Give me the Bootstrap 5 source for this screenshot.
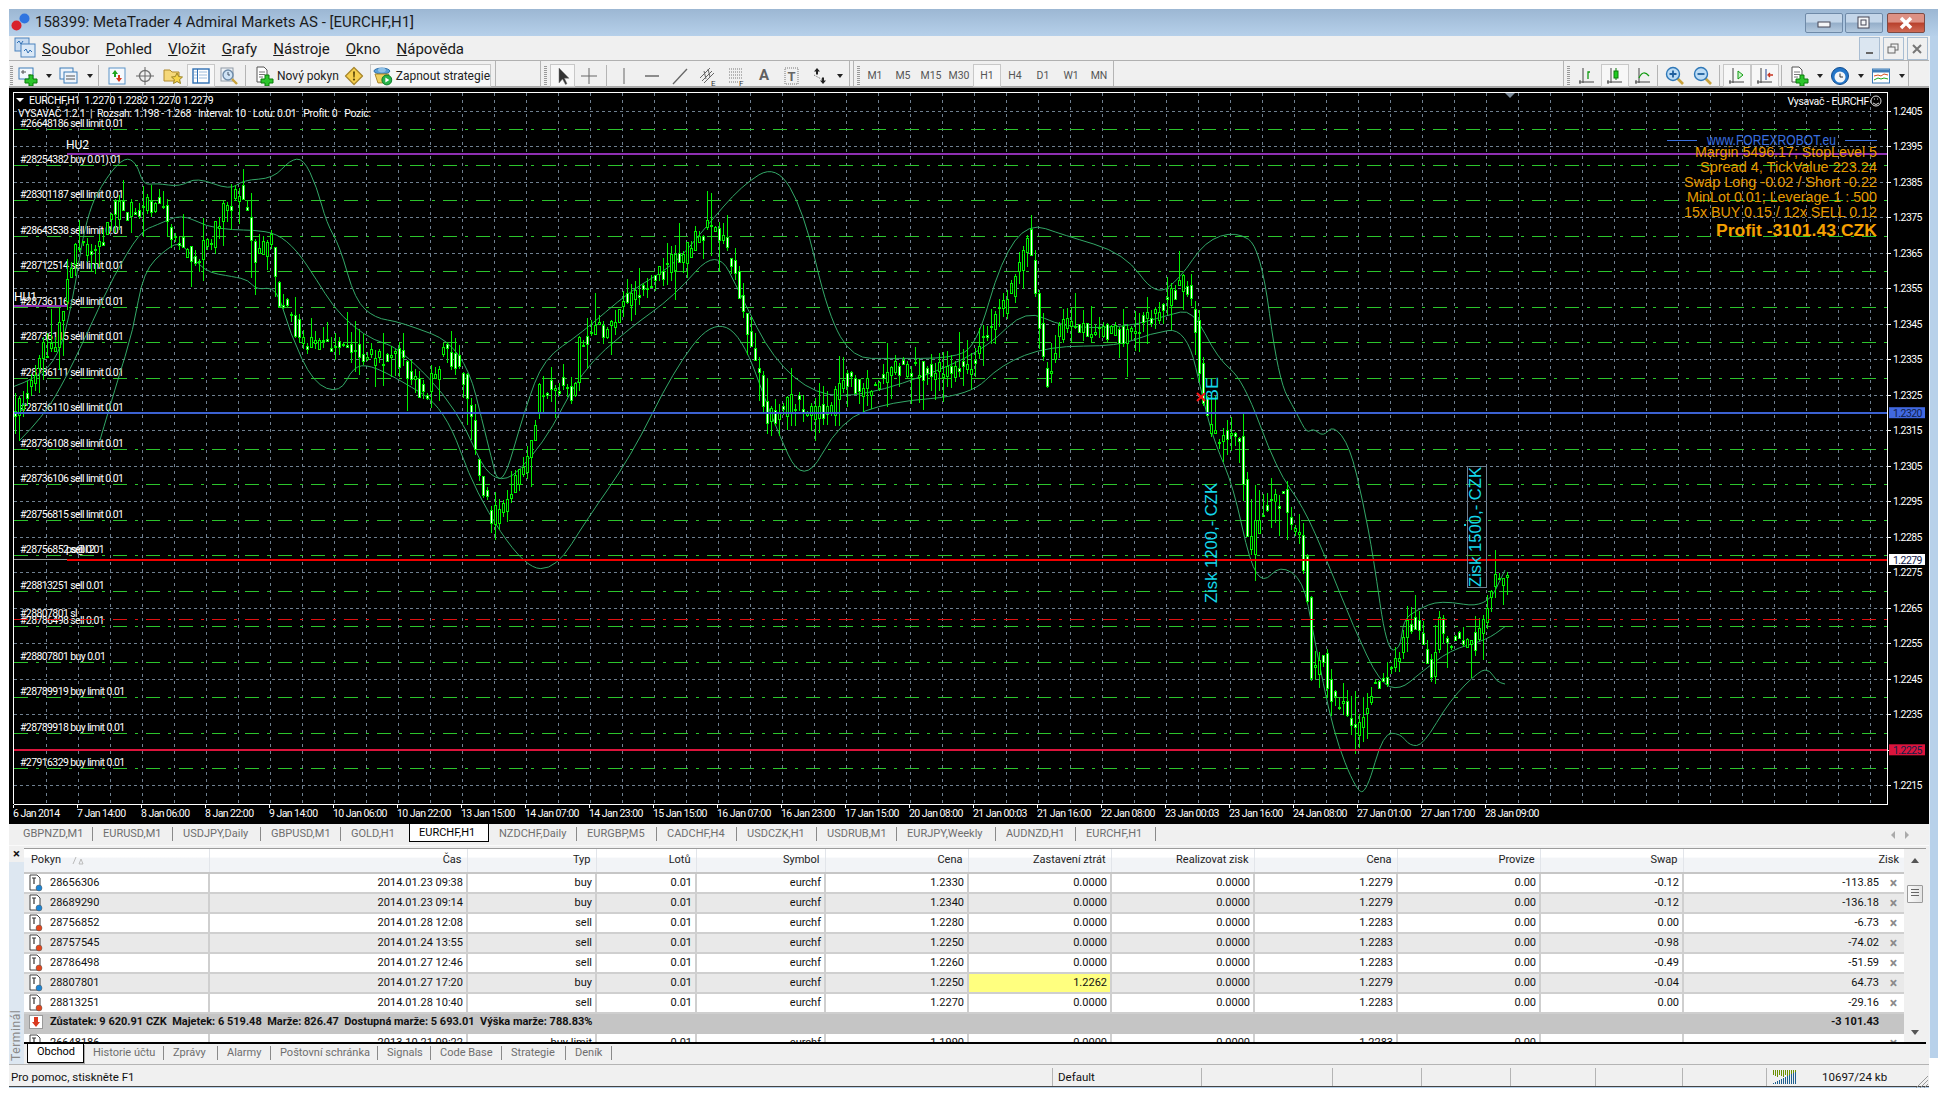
<!DOCTYPE html>
<html lang="cs">
<head>
<meta charset="UTF-8">
<title>158399: MetaTrader 4 Admiral Markets AS - [EURCHF,H1]</title>
<link href="https://cdn.jsdelivr.net/npm/bootstrap@5.3.3/dist/css/bootstrap.min.css" rel="stylesheet">
<style>
html, body { background: #fff; overflow: hidden; }
body { font-family: Roboto, "Liberation Sans", sans-serif; font-size: 11px; color: #111; padding: 9px 0 0 9px; width: 1938px; height: 1098px; }
svg { display: block; }

/* title bar */
.titlebar { height: 27px; background: linear-gradient(#9cb7d3, #b6d0ea); font-size: 15px; color: #1c1c1c; }
.logo { width: 22px; height: 24px; margin: 0 2px; }
.win-btn { width: 38px; height: 20px; padding: 0; border: 1px solid #6f8aa8; border-radius: 2px; background: linear-gradient(#c4d6e9 45%, #94aec9 50%, #b4c9de); margin-right: 2px; }
.win-btn.close-x { background: linear-gradient(#dd9184 45%, #b8402c 50%, #cf6a55); border-color: #7d4a44; margin-left: 2px; }
.win-btns { margin-right: 11px; }
.shell { width: 1920px; }
.frame-r { width: 9px; height: 1022px; background: #b8d1ea; border-left: 1px solid #eef3f8; }

/* menu */
.menubar { height: 25px; background: #f0f0f0; border-bottom: 1px solid #b0b0b0; }
.menubar .nav-link { color: #1a1a1a; font-size: 15px; padding: 1px 10px 0; line-height: 24px; }
.mdi-btn { width: 21px; height: 23px; padding: 0; margin-left: 3px; border: 1px solid #a9bdd2; border-radius: 0; background: #dbe6f1; }
.mdi-btn.plain { background: #f0f0f0; }
.mdi-btns { margin-right: 1px; }
.menu-ico { width: 22px; height: 22px; margin-left: 5px; margin-right: -2px; }

/* toolbars */
.toolbar { height: 27px; background: #f0f0f0; border-bottom: 2px solid #a8a8a8; }
.tgroup { height: 25px; padding-top: 4px; border-right: 1px solid #b4b4b4; }
.tg1 { width: 487px; }
.tg2 { width: 310px; margin-left: 44px; border-left: 1px solid #b4b4b4; }
.tg3 { width: 261px; margin-left: 3px; border-left: 1px solid #b4b4b4; }
.tg4 { width: 346px; margin-left: auto; margin-right: 20px; border-left: 1px solid #b4b4b4; }
.grip { width: 8px; height: 19px; margin: 0 1px 0 0; background: repeating-linear-gradient(#9a9a9a 0 1px, transparent 1px 2px); background-size: 3px 100%; background-repeat: no-repeat; background-position: center; flex: none; }
.tg1 .grip { width: 4px; margin-right: 1px; }
.tg3 .grip { margin-right: -1px; }
.tb { width: 28px; height: 23px; padding: 0; border: 1px solid transparent; border-radius: 0; display: flex; align-items: center; justify-content: center; font-size: 10.5px; color: #555; flex: none; white-space: nowrap; }
.tb.on { background: #f7f7f7; border-color: #c8c8c8; }
.tb.narrow { width: 25px; }
.tb-a { font-size: 15px; font-weight: 700; color: #606060; }
.tb-arrow { width: 13px; height: 23px; display: flex; align-items: center; justify-content: center; flex: none; }
.tb-arrow::after { content: ""; border: 3px solid transparent; border-top: 4px solid #222; border-bottom: 0; }
.tg2 .tb-arrow { width: 11px; }
.tb-wide { width: 90px; justify-content: flex-start; color: #222; font-size: 12px; gap: 3px; padding-left: 3px; }
.tb-strat { width: 121px; margin-left: 2px; justify-content: flex-start; color: #222; font-size: 12px; gap: 3px; padding-left: 2px; }
.tsep { width: 1px; height: 22px; background: #b4b4b4; flex: none; }
.sep-a { margin: 0 4px 0 2px; }
.tg2 .sep-a { margin: 0 3px; }
.sep-b { margin: 0 3px 0 2px; }
.sep-c { margin: 0 3px 0 0; }

/* chart */
.chart { height: 736px; background: #000; }
.c-lbl { font: 10.5px Roboto, sans-serif; fill: #fff; letter-spacing: -.6px; }
.c-hd { font: 10.5px Roboto, sans-serif; fill: #fff; letter-spacing: -.3px; }
.c-hu { font: 12px Roboto, sans-serif; fill: #fff; }
.c-ax { font: 10.5px Roboto, sans-serif; fill: #fff; letter-spacing: -.55px; }
.c-tag { font: 10.5px Roboto, sans-serif; fill: #10204a; letter-spacing: -.55px; }
.c-info { font: 15px "Liberation Sans", sans-serif; fill: #e69a00; }
.c-web { fill: #3a70e0; }
.c-profit { font-weight: 700; font-size: 16px; fill: #f5a000; }
.c-cyan { font: 16px "Liberation Sans", sans-serif; fill: #14d6ea; }

/* chart tabs */
.chart-tabs { height: 22px; background: #f0f0f0; border-bottom: 1px solid #fafafa; }
.ctab { width: 80px; height: 14px; line-height: 13px; padding-left: 10px; color: #6e6e6e; border-right: 1px solid #8a8a8a; flex: none; margin-top: 3px; white-space: nowrap; }
.ctab.first { width: 84px; padding-left: 14px; }
.ctab.w68 { width: 68px; }
.ctab.w88 { width: 88px; }
.ctab.w100 { width: 99px; }
.ctab.active { color: #000; background: #fff; height: 18px; margin-top: 0; line-height: 18px; border: 1px solid #000; border-top: 0; padding-left: 9px; }
.ctab.pre { border-right: 0; }
.tab-nav { margin-right: 20px; gap: 10px; }
.tab-nav i { border: 4px solid transparent; display: block; width: 0; }
.tab-nav .l { border-right: 4px solid #aaa; border-left: 0; }
.tab-nav .r { border-left: 4px solid #aaa; border-right: 0; }

/* terminal */
.terminal { height: 219px; background: #f0f0f0; padding-top: 2px; border-bottom: 1px solid #b4b4b4; }
.rail { width: 15px; }
.rail-x { height: 14px; font-size: 13px; font-weight: 700; line-height: 12px; text-align: center; }
.rail-t { background: #dde7f1; color: #8a8a8a; font-size: 12px; letter-spacing: .6px; writing-mode: vertical-rl; transform: rotate(180deg); padding-top: 3px; line-height: 15px; }
.orders-box { width: 1902px; height: 194px; overflow: hidden; border-top: 1px solid #9c9c9c; background: #fff; }
.orders-wrap { width: 1880px; }
.orders.table { width: 1880px; table-layout: fixed; margin: 0; border-collapse: collapse; font-size: 11px; }
.orders.table th { height: 24px; padding: 0 5px 0 0; font-weight: 400; text-align: right; vertical-align: middle; color: #222; background: linear-gradient(#fff 35%, #f2f4f7 40%, #f2f4f7); border: 0; border-right: 1px solid #e2e5ea; border-bottom: 2px solid #c6c6c6; }
.orders.table th:first-child { text-align: left; padding-left: 7px; }
.orders.table td { height: 20px; padding: 0 3px 0 0; line-height: 18px; text-align: right; color: #111; background: #fff; border: 0; border-right: 2px solid #cfcfcf; border-bottom: 2px solid #cfcfcf; white-space: nowrap; overflow: hidden; }
.orders.table thead tr { border-bottom: 2px solid #fff; }
.orders.table td:first-child { text-align: left; padding-left: 4px; }
.orders.table td:last-child, .orders.table th:last-child { border-right: 0; }
.orders.table tr.alt td { background: #e9e9e9; }
.orders.table tr td.stop { background: #ffff7f; }
.orders.table tr.bal td { background: #c5c5c5; font-weight: 700; border: 0; height: 21px; line-height: 16px; }
.cell-ico { display: flex; align-items: center; gap: 6px; }
.buy { color: #1c86d6; }
.sell { color: #e5471c; }
.del { display: inline-block; width: 22px; padding: 0 2px 0 9px; color: #8b8b8b; font-weight: 700; font-size: 14px; line-height: 12px; text-align: center; vertical-align: middle; }
.sort { display: inline-block; margin-left: 11px; vertical-align: middle; }
.vscroll { width: 22px; background: #f0f0f0; }
.vscroll .up { border: 4px solid transparent; border-bottom: 5px solid #555; border-top: 0; margin-top: 9px; }
.vscroll .down { border: 4px solid transparent; border-top: 5px solid #555; border-bottom: 0; margin-bottom: 7px; }
.thumb { width: 16px; height: 18px; margin-top: 22px; border: 1px solid #9a9a9a; border-radius: 1px; background: linear-gradient(90deg, #fafafa, #e4e4e4); padding: 3px 3px; }
.thumb hr { margin: 0 0 2px; border: 0; border-top: 1px solid #666; opacity: 1; }
.term-tabs { height: 21px; border-top: 2px solid #000; display: grid; grid-template-columns: 60px 80px 54px 53px 107px 53px 71px 64px 46px; justify-content: start; }
.ttab { height: 14px; line-height: 13px; padding-left: 9px; color: #6e6e6e; border-right: 1px solid #8a8a8a; margin-top: 2px; white-space: nowrap; }
.ttab.active { margin: 0 0 0 3px; height: 19px; line-height: 16px; color: #000; background: #fff; border: 1px solid #000; border-top: 0; box-shadow: 1px 1px 0 #aaa; }

/* status bar */
.statusbar { height: 22px; background: #f0f0f0; display: grid; grid-template-columns: 1044px 149px 131px 89px 89px 85px 87px 84px 1fr; border-bottom: 1px solid #444; font-size: 11.5px; line-height: 20px; }
.statusbar > div { border-right: 1px solid #b4b4b4; padding-left: 5px; margin-top: 3px; height: 18px; line-height: 19px; white-space: nowrap; }
.statusbar > div:first-child { padding-left: 2px; }
.statusbar > div:last-child { border: 0; padding-left: 6px; display: flex; gap: 25px; align-items: center; position: relative; }
.size-grip { position: absolute; right: 0; bottom: -3px; }
.bottom-edge { height: 1px; background: #b8d1ea; }
</style>
</head>
<body>
<svg width="0" height="0" class="position-absolute">
  <defs>
    <symbol id="plus" viewBox="0 0 20 20"><path d="M10 9h4v4h4v4h-4v3h-4v-3H6v-4h4z" fill="#2cc52c" stroke="#0a7d0a"/></symbol>
    <symbol id="i-new" viewBox="0 0 20 20"><rect x="1" y="2" width="14" height="11" fill="#f4f8fc" stroke="#3d7cb8"/><path d="M3 6h5M5 4v4M10 9h3" stroke="#555"/><use href="#plus" width="20" height="20" x="1"/></symbol>
    <symbol id="i-prof" viewBox="0 0 20 20"><rect x="1" y="2" width="13" height="11" fill="#eef4fb" stroke="#3d7cb8"/><rect x="5" y="6" width="13" height="11" fill="#eef4fb" stroke="#3d7cb8"/><path d="M7 10h9M7 13h9" stroke="#555"/></symbol>
    <symbol id="i-market" viewBox="0 0 20 20"><rect x="2" y="2" width="16" height="16" fill="#f6f9fd" stroke="#5b93c7"/><path d="M8 4l3 4H9v3H7V8H5z" fill="#1fa51f"/><path d="M12 16l3-4h-2V9h-2v3H9z" fill="#d9381e"/></symbol>
    <symbol id="i-target" viewBox="0 0 20 20"><circle cx="10" cy="10" r="5.5" fill="none" stroke="#777" stroke-width="1.4"/><path d="M10 1v18M1 10h18" stroke="#666"/></symbol>
    <symbol id="i-folder" viewBox="0 0 20 20"><path d="M1 4h6l2 2h7v9H1z" fill="#f5d87a" stroke="#b08a2c"/><path d="M14 7l1.7 3.6 3.8.4-2.9 2.6.9 3.9-3.500-2-3.500 2 .9-3.900-2.900-2.600 3.800-.4z" fill="#f6d447" stroke="#9c8424"/></symbol>
    <symbol id="i-nav" viewBox="0 0 20 20"><rect x="2" y="3" width="16" height="14" fill="#fff" stroke="#2f6fb3" stroke-width="1.4"/><path d="M6.5 3v14" stroke="#2f6fb3"/><path d="M3 6h3M3 9h3M3 12h3M8 6h8M8 9h8M8 12h8" stroke="#9cbcdc"/></symbol>
    <symbol id="i-test" viewBox="0 0 20 20"><rect x="2" y="2" width="12" height="13" fill="#eef2f6" stroke="#8f9aa5"/><circle cx="9" cy="9" r="5" fill="#cfe3f5" stroke="#6e8ba8" stroke-width="1.4"/><path d="M9 6v3h2" stroke="#456" fill="none"/><path d="M13 13l5 5" stroke="#c9a23b" stroke-width="2.4"/></symbol>
    <symbol id="i-order" viewBox="0 0 20 20"><path d="M3 1h7l3 3v12H3z" fill="#fff" stroke="#555"/><path d="M5 6h6M5 8.5h6M5 11h4" stroke="#777"/><use href="#plus" width="20" height="20" x="1"/></symbol>
    <symbol id="i-warn" viewBox="0 0 20 20"><path d="M10 1.5l8.5 8.5-8.5 8.5L1.5 10z" fill="#f6cf4e" stroke="#a9882d" stroke-linejoin="round" stroke-width="1.3"/><path d="M9 5.5h2l-.4 6h-1.2z" fill="#5a4708"/><circle cx="10" cy="13.6" r="1.1" fill="#5a4708"/></symbol>
    <symbol id="i-strat" viewBox="0 0 20 20"><ellipse cx="9" cy="5" rx="8" ry="3" fill="#5a9fd8" stroke="#2f6fa8"/><ellipse cx="9" cy="4" rx="4" ry="2.4" fill="#8fc1e8"/><path d="M2 8h14l-2 9H5z" fill="#f0d060" stroke="#a9882d"/><circle cx="14" cy="14" r="5" fill="#27b34a" stroke="#0f7a2b"/><path d="M12.5 11.5l4 2.5-4 2.5z" fill="#fff"/></symbol>
    <symbol id="i-cursor" viewBox="0 0 20 20"><path d="M6 2v15l3.5-4 3 5.500 1.500-.8-2.600-5.500H16z" fill="#333" stroke="#777" stroke-width=".5"/></symbol>
    <symbol id="i-cross" viewBox="0 0 20 20"><path d="M10 2v16M2 10h16" stroke="#666"/></symbol>
    <symbol id="i-v" viewBox="0 0 20 20"><path d="M10 2v16" stroke="#666"/></symbol>
    <symbol id="i-h" viewBox="0 0 20 20"><path d="M3 10h14" stroke="#555" stroke-width="1.300"/></symbol>
    <symbol id="i-trend" viewBox="0 0 20 20"><path d="M3 18L17 3" stroke="#666" stroke-width="1.300"/></symbol>
    <symbol id="i-chan" viewBox="0 0 20 20"><path d="M2 12L12 2M4 15L14 5M6 17L16 7M6 5l2 8M10 3l2 8" stroke="#666" fill="none"/><text x="13" y="20" font-size="8" font-family="Roboto" fill="#333">E</text></symbol>
    <symbol id="i-fib" viewBox="0 0 20 20"><path d="M3 3h13M3 6h13M3 9h13M3 12h13M3 16h9" stroke="#777" stroke-dasharray="1 1"/><text x="13" y="20" font-size="8" font-family="Roboto" fill="#333">F</text></symbol>
    <symbol id="i-tx" viewBox="0 0 20 20"><rect x="3" y="2" width="13" height="16" fill="none" stroke="#777" stroke-dasharray="1 1"/><text x="9.500" y="15" text-anchor="middle" font-size="13" font-weight="700" font-family="Roboto" fill="#666">T</text></symbol>
    <symbol id="i-arr" viewBox="0 0 20 20"><path d="M7 2l3 3.500H8v3H6v-3H4z" fill="#222"/><path d="M12 17l3-3.500h-2v-3h-2v3H9z" fill="#222" transform="translate(1 1)"/><path d="M4 9l9 5" stroke="#666" stroke-dasharray="1 1"/></symbol>
    <g id="axes"><path d="M6 2v15M2 16h15" stroke="#444"/><path d="M3 14v4" stroke="#444"/></g>
    <symbol id="i-bar" viewBox="0 0 20 20"><use href="#axes"/><path d="M11 13V6h2" stroke="#109a10" fill="none" stroke-width="1.300"/></symbol>
    <symbol id="i-candle" viewBox="0 0 20 20"><use href="#axes"/><rect x="9" y="5" width="4" height="7" fill="#1ecb1e" stroke="#0a7d0a"/><path d="M11 2v3M11 12v2" stroke="#0a7d0a"/></symbol>
    <symbol id="i-line" viewBox="0 0 20 20"><use href="#axes"/><path d="M6 12Q10 3 16 10" stroke="#109a10" fill="none" stroke-width="1.200"/></symbol>
    <symbol id="i-zin" viewBox="0 0 20 20"><path d="M12 12l6 6" stroke="#c9a23b" stroke-width="2.600"/><circle cx="8" cy="8" r="6.500" fill="#bcdcf5" stroke="#2f78b8" stroke-width="1.400"/><path d="M4.500 8h7M8 4.500v7" stroke="#1f5f9e" stroke-width="1.800"/></symbol>
    <symbol id="i-zout" viewBox="0 0 20 20"><path d="M12 12l6 6" stroke="#c9a23b" stroke-width="2.600"/><circle cx="8" cy="8" r="6.500" fill="#bcdcf5" stroke="#2f78b8" stroke-width="1.400"/><path d="M4.500 8h7" stroke="#1f5f9e" stroke-width="1.800"/></symbol>
    <symbol id="i-auto" viewBox="0 0 20 20"><use href="#axes"/><path d="M11 5l5 4-5 4z" fill="#c8f5c8" stroke="#109a10"/></symbol>
    <symbol id="i-shift" viewBox="0 0 20 20"><use href="#axes"/><path d="M11 3v11" stroke="#23408f"/><path d="M18 9h-4M15 7l-2 2 2 2" stroke="#c8321e" fill="none" stroke-width="1.300"/></symbol>
    <symbol id="i-clock" viewBox="0 0 20 20"><circle cx="10" cy="10" r="8.500" fill="#2376c9" stroke="#134e8f"/><circle cx="10" cy="11" r="5.500" fill="#f3f6f8"/><path d="M10 7.500V11h3" stroke="#333" fill="none"/></symbol>
    <symbol id="i-tmpl" viewBox="0 0 20 20"><rect x="1.500" y="3" width="17" height="14" fill="#fff" stroke="#3d7cb8"/><rect x="2" y="3.500" width="16" height="3" fill="#3d7cb8"/><path d="M3 10l4-1 3 1 3-2 4 1" stroke="#d8501e" fill="none"/><path d="M3 14l4-2 3 1 3-1 4 1" stroke="#1fa51f" fill="none"/></symbol>
    <symbol id="i-ticket" viewBox="0 0 16 18"><path d="M2 1h7l3 3v12H2z" fill="#fff" stroke="#444"/><path d="M4 4h4M6 4v6" stroke="#333" stroke-width="1.200"/><circle cx="11" cy="14" r="3" fill="currentColor" stroke="#555" stroke-width=".5"/></symbol>
  </defs>
</svg>

<div class="titlebar d-flex align-items-center">
  <svg class="logo" viewBox="0 0 22 24"><circle cx="13.500" cy="7.500" r="5" fill="#2f74e0"/><circle cx="5.500" cy="14.500" r="5" fill="#d8222c"/></svg>
  <span>158399: MetaTrader 4 Admiral Markets AS - [EURCHF,H1]</span>
  <div class="win-btns ms-auto d-flex">
    <button class="btn win-btn" aria-label="Minimalizovat"><svg width="14" height="10" class="mx-auto"><rect x="1" y="4" width="12" height="5" fill="#f4f6f8" stroke="#445"/></svg></button>
    <button class="btn win-btn" aria-label="Obnovit"><svg width="14" height="14" class="mx-auto"><rect x="1" y="1" width="11" height="11" fill="#f4f6f8" stroke="#445"/><rect x="4" y="4" width="5" height="5" fill="none" stroke="#445"/></svg></button>
    <button class="btn win-btn close-x" aria-label="Zavřít"><svg width="16" height="14" class="mx-auto"><path d="M3 2l10 10M13 2L3 12" stroke="#fff" stroke-width="3.500"/></svg></button>
  </div>
</div>

<div class="d-flex align-items-start">
<div class="shell">
  <div class="menubar d-flex align-items-center">
    <svg class="menu-ico" viewBox="0 0 22 22"><rect x="1" y="1" width="14" height="13" fill="#c6daf0" stroke="#4a82bd"/><rect x="7" y="7" width="14" height="13" fill="#dbe9f7" stroke="#4a82bd"/><path d="M3 6l2-2 2 3 2-3M10 14l2-2 2 4 2-3 2 2" stroke="#2f6fb3" fill="none"/></svg>
    <nav class="navbar navbar-expand p-0">
      <div class="navbar-nav">
        <a class="nav-link" href="#"><u>S</u>oubor</a>
        <a class="nav-link" href="#"><u>P</u>ohled</a>
        <a class="nav-link" href="#"><u>V</u>ložit</a>
        <a class="nav-link" href="#"><u>G</u>rafy</a>
        <a class="nav-link" href="#"><u>N</u>ástroje</a>
        <a class="nav-link" href="#"><u>O</u>kno</a>
        <a class="nav-link" href="#"><u>N</u>ápověda</a>
      </div>
    </nav>
    <div class="mdi-btns ms-auto d-flex">
      <button class="btn mdi-btn" aria-label="Minimalizovat"><svg width="19" height="21"><path d="M6 15h7" stroke="#666" stroke-width="2"/></svg></button>
      <button class="btn mdi-btn plain" aria-label="Obnovit"><svg width="19" height="21"><rect x="7" y="6" width="7" height="6" fill="none" stroke="#666"/><rect x="4" y="9" width="7" height="6" fill="#f0f0f0" stroke="#666"/></svg></button>
      <button class="btn mdi-btn plain" aria-label="Zavřít"><svg width="19" height="21"><path d="M5 7l8 8M13 7l-8 8" stroke="#777" stroke-width="2"/></svg></button>
    </div>
  </div>

  <div class="toolbar d-flex">
    <div class="tgroup tg1 d-flex align-items-center">
      <div class="grip"></div>
      <button class="btn tb"><svg width="20" height="20"><use href="#i-new"/></svg></button><span class="tb-arrow"></span>
      <button class="btn tb"><svg width="20" height="20"><use href="#i-prof"/></svg></button><span class="tb-arrow"></span>
      <div class="tsep sep-a"></div>
      <button class="btn tb"><svg width="20" height="20"><use href="#i-market"/></svg></button>
      <button class="btn tb"><svg width="20" height="20"><use href="#i-target"/></svg></button>
      <button class="btn tb"><svg width="20" height="20"><use href="#i-folder"/></svg></button>
      <button class="btn tb on"><svg width="20" height="20"><use href="#i-nav"/></svg></button>
      <button class="btn tb"><svg width="20" height="20"><use href="#i-test"/></svg></button>
      <div class="tsep sep-a"></div>
      <button class="btn tb tb-wide"><svg width="20" height="20"><use href="#i-order"/></svg>Nový pokyn</button>
      <button class="btn tb"><svg width="20" height="20"><use href="#i-warn"/></svg></button>
      <button class="btn tb tb-strat on"><svg width="20" height="20"><use href="#i-strat"/></svg>Zapnout strategie</button>
    </div>
    <div class="tgroup tg2 d-flex align-items-center">
      <div class="grip"></div>
      <button class="btn tb narrow on"><svg width="20" height="20"><use href="#i-cursor"/></svg></button>
      <button class="btn tb"><svg width="20" height="20"><use href="#i-cross"/></svg></button>
      <div class="tsep sep-a"></div>
      <button class="btn tb"><svg width="20" height="20"><use href="#i-v"/></svg></button>
      <button class="btn tb"><svg width="20" height="20"><use href="#i-h"/></svg></button>
      <button class="btn tb"><svg width="20" height="20"><use href="#i-trend"/></svg></button>
      <button class="btn tb"><svg width="20" height="20"><use href="#i-chan"/></svg></button>
      <button class="btn tb"><svg width="20" height="20"><use href="#i-fib"/></svg></button>
      <button class="btn tb tb-a">A</button>
      <button class="btn tb"><svg width="20" height="20"><use href="#i-tx"/></svg></button>
      <button class="btn tb"><svg width="20" height="20"><use href="#i-arr"/></svg></button><span class="tb-arrow"></span>
    </div>
    <div class="tgroup tg3 d-flex align-items-center">
      <div class="grip"></div>
      <button class="btn tb">M1</button><button class="btn tb">M5</button><button class="btn tb">M15</button><button class="btn tb">M30</button>
      <button class="btn tb on">H1</button><button class="btn tb">H4</button><button class="btn tb">D1</button><button class="btn tb">W1</button><button class="btn tb">MN</button>
    </div>
    <div class="tgroup tg4 d-flex align-items-center">
      <div class="grip"></div>
      <button class="btn tb"><svg width="20" height="20"><use href="#i-bar"/></svg></button>
      <button class="btn tb on"><svg width="20" height="20"><use href="#i-candle"/></svg></button>
      <button class="btn tb"><svg width="20" height="20"><use href="#i-line"/></svg></button>
      <div class="tsep sep-c"></div>
      <button class="btn tb"><svg width="20" height="20"><use href="#i-zin"/></svg></button>
      <button class="btn tb"><svg width="20" height="20"><use href="#i-zout"/></svg></button>
      <div class="tsep sep-b"></div>
      <button class="btn tb on"><svg width="20" height="20"><use href="#i-auto"/></svg></button>
      <button class="btn tb on"><svg width="20" height="20"><use href="#i-shift"/></svg></button>
      <div class="tsep sep-b"></div>
      <button class="btn tb"><svg width="20" height="20"><use href="#i-order"/></svg></button><span class="tb-arrow"></span>
      <button class="btn tb"><svg width="20" height="20"><use href="#i-clock"/></svg></button><span class="tb-arrow"></span>
      <button class="btn tb"><svg width="20" height="20"><use href="#i-tmpl"/></svg></button><span class="tb-arrow"></span>
    </div>
  </div>

  <div class="chart"><svg id="chart" width="1920" height="736" viewBox="9 88 1920 736"></svg></div>

  <div class="chart-tabs d-flex" id="chart-tabs"></div>

  <div class="terminal d-flex">
    <div class="rail d-flex flex-column">
      <div class="rail-x">×</div>
      <div class="rail-t flex-grow-1">Terminál</div>
    </div>
    <div class="d-flex flex-column">
      <div class="orders-box d-flex">
        <div class="orders-wrap">
          <table class="table orders">
            <colgroup id="cols"></colgroup>
            <thead><tr id="orders-head"></tr></thead>
            <tbody id="orders-body"></tbody>
          </table>
        </div>
        <div class="vscroll d-flex flex-column align-items-center">
          <div class="up"></div>
          <div class="thumb"><hr><hr><hr></div>
          <div class="down mt-auto"></div>
        </div>
      </div>
      <div class="term-tabs" id="term-tabs"></div>
    </div>
  </div>

  <div class="statusbar">
    <div>Pro pomoc, stiskněte F1</div>
    <div>Default</div>
    <div></div><div></div><div></div><div></div><div></div><div></div>
    <div>
      <svg width="24" height="14" id="conn"></svg>
      <span>10697/24 kb</span>
      <svg class="size-grip" width="14" height="14"><path d="M13 1L1 13M13 5L5 13M13 9l-4 4" stroke="#999"/></svg>
    </div>
  </div>
  <div class="bottom-edge"></div>
</div>
<div class="frame-r"></div>
</div>

<script>
  // table data
  const widths = [185, 258, 129, 100, 129, 143, 143, 143, 143, 143, 143, 221];
  const heads = ['Pokyn', 'Čas', 'Typ', 'Lotů', 'Symbol', 'Cena', 'Zastavení ztrát', 'Realizovat zisk', 'Cena', 'Provize', 'Swap', 'Zisk'];
  const orders = [
    ['28656306', '2014.01.23 09:38', 'buy', '1.2330', '0.0000', '1.2279', '-0.12', '-113.85'],
    ['28689290', '2014.01.23 09:14', 'buy', '1.2340', '0.0000', '1.2279', '-0.12', '-136.18'],
    ['28756852', '2014.01.28 12:08', 'sell', '1.2280', '0.0000', '1.2283', '0.00', '-6.73'],
    ['28757545', '2014.01.24 13:55', 'sell', '1.2250', '0.0000', '1.2283', '-0.98', '-74.02'],
    ['28786498', '2014.01.27 12:46', 'sell', '1.2260', '0.0000', '1.2283', '-0.49', '-51.59'],
    ['28807801', '2014.01.27 17:20', 'buy', '1.2250', '1.2262', '1.2279', '-0.04', '64.73'],
    ['28813251', '2014.01.28 10:40', 'sell', '1.2270', '0.0000', '1.2283', '0.00', '-29.16'],
  ];
  const row = (o, cls) => `<tr class="${cls}">
    <td><div class="cell-ico"><svg width="16" height="18" class="${o[2].startsWith('buy') ? 'buy' : 'sell'}"><use href="#i-ticket"/></svg>${o[0]}</div></td>
    <td>${o[1]}</td><td>${o[2]}</td><td>0.01</td><td>eurchf</td><td>${o[3]}</td>
    <td class="${o[4] !== '0.0000' ? 'stop' : ''}">${o[4]}</td><td>0.0000</td><td>${o[5]}</td><td>0.00</td><td>${o[6]}</td>
    <td>${o[7]}<span class="del">×</span></td></tr>`;

  document.getElementById('cols').innerHTML = widths.map(w => `<col width="${w}">`).join('');
  document.getElementById('orders-head').innerHTML = heads.map((h, i) => i === 0
    ? `<th>${h}<svg class="sort" width="12" height="9"><path d="M1 8L4 1M7 8l2-5 2 5z" stroke="#bbb" fill="none"/></svg></th>` : `<th>${h}</th>`).join('');
  document.getElementById('orders-body').innerHTML =
    orders.map((o, i) => row(o, i % 2 ? 'alt' : '')).join('') +
    `<tr class="bal"><td colspan="8"><div class="cell-ico"><svg width="16" height="16"><rect x="1.500" y="1.500" width="13" height="13" fill="#fff" stroke="#999"/><path d="M6 3h4v5h2l-4 5-4-5h2z" fill="#d9381e"/></svg>Zůstatek: 9 620.91 CZK&nbsp; Majetek: 6 519.48&nbsp; Marže: 826.47&nbsp; Dostupná marže: 5 693.01&nbsp; Výška marže: 788.83%</div></td><td colspan="3"></td><td>-3 101.43<span class="del"></span></td></tr>` +
    row(['26648186', '2013.10.21 09:22', 'buy limit', '1.1990', '0.0000', '1.2283', '', ''], '');

  // tabs
  const chartTabs = [['GBPNZD,M1', 'first'], ['EURUSD,M1'], ['USDJPY,Daily', 'w88'], ['GBPUSD,M1'], ['GOLD,H1', 'w68 pre'], ['EURCHF,H1', 'active'],
    ['NZDCHF,Daily', 'w88'], ['EURGBP,M5'], ['CADCHF,H4'], ['USDCZK,H1'], ['USDRUB,M1'], ['EURJPY,Weekly', 'w100'], ['AUDNZD,H1'], ['EURCHF,H1']];
  document.getElementById('chart-tabs').innerHTML = chartTabs.map(t => `<div class="ctab ${t[1] || ''}">${t[0]}</div>`).join('') +
    '<div class="tab-nav ms-auto d-flex align-items-center"><i class="l"></i><i class="r"></i></div>';
  const termTabs = ['Obchod', 'Historie účtu', 'Zprávy', 'Alarmy', 'Poštovní schránka', 'Signals', 'Code Base', 'Strategie', 'Deník'];
  document.getElementById('term-tabs').innerHTML = termTabs.map((t, i) => `<div class="ttab ${i ? '' : 'active'}">${t}</div>`).join('');

  // connection bars in the status bar
  let conn = '';
  for (let i = 0; i < 12; i++) {
    conn += `<rect x="${i * 2}" y="0" width="1" height="${5 + (i % 3)}" fill="#6b8e00"/><rect x="${i * 2}" y="${13 - i}" width="1" height="${i + 1}" fill="#1f5f8f"/>`;
  }
  document.getElementById('conn').innerHTML = conn;

  // chart, all coordinates are page pixels (see the viewBox)
  const V = 1.236; // waypoints read from the downscaled view
  const v = pts => pts.map(p => [p[0] * V, p[1] * V]);
  const z7 = pts => pts.map(p => [p[0] / 3, 90 + p[1] / 3]);
  const z8 = pts => pts.map(p => [1100 + p[0] / 3, 380 + p[1] / 3]);

  const price = [[14, 418], [33, 383], [43, 353], [58, 340], [67, 290], [75, 253], [90, 247], [103, 247], [112, 210], [133, 210], [153, 203], [163, 203], [167, 223], [187, 250], [200, 257], [213, 237], [230, 203], [243, 190], [250, 223], [257, 263], [267, 247], [273, 243], [280, 297], [293, 317], [303, 343], [333, 347], [350, 347], [373, 357], [400, 357]]
    .concat(v([[345, 322], [360, 285], [375, 300], [382, 340], [390, 390], [400, 420], [415, 395], [430, 370], [438, 315], [450, 310], [465, 320], [470, 275], [490, 265], [510, 240], [530, 225], [555, 205], [575, 182], [585, 190], [600, 235], [612, 290], [622, 340], [640, 325], [660, 335], [672, 335], [682, 305], [700, 315], [725, 295], [750, 300], [785, 300], [800, 265], [820, 235], [833, 185], [840, 250], [848, 310], [860, 260], [885, 270], [910, 270], [935, 255], [960, 225], [968, 260]]))
    .concat([[1203, 385], [1210, 430], [1243, 440], [1247, 513], [1250, 563], [1257, 523], [1273, 500], [1287, 497], [1290, 530], [1300, 523], [1307, 577], [1311, 613], [1313, 673], [1327, 657], [1330, 700], [1343, 697], [1357, 727], [1367, 710], [1373, 690], [1387, 680], [1400, 663], [1407, 617], [1417, 630], [1427, 650], [1433, 670], [1440, 623], [1450, 643], [1467, 640], [1477, 640], [1487, 613], [1497, 580], [1507, 570]]);

  const upper = z7([[40, 890], [110, 865], [175, 800], [215, 650], [260, 370], [320, 260], [375, 200], [410, 220], [430, 285], [470, 280], [540, 290], [590, 262], [690, 300], [730, 270], [820, 265], [870, 210], [910, 205], [950, 290], [980, 400], [1020, 470], [1065, 630], [1125, 685], [1200, 695]])
    .concat(v([[375, 280], [395, 360], [405, 400], [425, 330], [440, 290], [470, 270], [510, 235], [545, 215], [570, 185], [600, 150], [628, 133], [650, 170], [670, 255], [690, 290], [720, 290], [770, 290], [790, 280], [810, 210], [832, 180], [860, 190], [910, 205], [935, 240], [955, 225], [975, 195], [1000, 187], [1020, 200]]))
    .concat(z8([[535, 0], [590, 100], [620, 160], [640, 145], [670, 170], [700, 135], [750, 200], [790, 370], [820, 530], [860, 810], [900, 810], [910, 720], [950, 690], [1020, 660], [1160, 685], [1215, 570]]));
  const middle = z7([[60, 1050], [130, 980], [200, 860], [280, 690], [340, 560], [420, 425], [470, 405], [545, 372], [620, 410], [700, 420], [760, 420], [830, 430], [890, 480], [950, 570], [1000, 650], [1060, 710], [1120, 750], [1200, 775]])
    .concat(v([[370, 330], [400, 400], [440, 360], [470, 300], [510, 265], [545, 240], [580, 200], [600, 240], [625, 290], [660, 320], [700, 320], [760, 300], [800, 280], [830, 250], [860, 265], [910, 265], [945, 255], [965, 250], [985, 290]]))
    .concat(z8([[430, 0], [530, 270], [610, 380], [680, 540], [760, 740], [840, 910], [900, 930], [960, 880], [1050, 810], [1160, 780], [1215, 740]]));
  const lower = z7([[300, 1050], [350, 880], [400, 720], [430, 545], [500, 475], [545, 455], [610, 545], [700, 560], [745, 570], [770, 600], [830, 590], [870, 730], [940, 880], [1020, 910], [1060, 830], [1110, 825], [1200, 870]])
    .concat(v([[360, 330], [385, 400], [425, 460], [450, 460], [475, 420], [510, 370], [545, 300], [575, 260], [600, 270], [625, 340], [650, 395], [680, 340], [720, 325], [785, 320], [810, 295], [848, 280], [905, 280], [930, 270], [960, 265], [975, 330]]))
    .concat(z8([[345, 190], [400, 320], [450, 550], [490, 610], [540, 555], [610, 600], [640, 760], [700, 1060], [770, 1235], [800, 1235], [850, 1060], [900, 1060], [930, 1098], [970, 1095], [1050, 960], [1140, 870], [1170, 870], [1190, 905], [1215, 912]]));

  // curve through the midpoints so the bands are not angular
  function smooth(pts) {
    let d = `M${pts[0][0].toFixed(1)} ${pts[0][1].toFixed(1)}`;
    for (let i = 1; i < pts.length - 1; i++) {
      const mx = (pts[i][0] + pts[i + 1][0]) / 2, my = (pts[i][1] + pts[i + 1][1]) / 2;
      d += `Q${pts[i][0].toFixed(1)} ${pts[i][1].toFixed(1)} ${mx.toFixed(1)} ${my.toFixed(1)}`;
    }
    const e = pts[pts.length - 1];
    return d + `L${e[0].toFixed(1)} ${e[1].toFixed(1)}`;
  }
  let seed = 4711;
  const rnd = () => (seed = (seed * 16807) % 2147483647) / 2147483647;
  function yAt(x) {
    for (let i = 1; i < price.length; i++) {
      if (x <= price[i][0]) {
        const a = price[i - 1], b = price[i];
        return a[1] + (b[1] - a[1]) * (x - a[0]) / (b[0] - a[0] || 1);
      }
    }
    return price[price.length - 1][1];
  }

  let s = '<g shape-rendering="crispEdges">';
  // gray grid
  for (let x = 46; x < 1887; x += 32) s += `<path d="M${x + .5} 93V804" stroke="#6f8090" stroke-dasharray="3 4"/>`;
  for (let i = 0; i <= 19; i++) s += `<path d="M14 ${Math.round(110.7 + 35.5 * i) + .5}H1887" stroke="#6f8090" stroke-dasharray="3 3"/>`;
  // pending order lines
  for (let i = 0; i < 19; i++) s += `<path d="M14 ${Math.round(129 + 35.5 * i) + .5}H1887" stroke="#2cc42c" stroke-dasharray="14 8 3 8"/>`;
  s += '</g>';

  // order labels
  const labels = ['#26648186 sell limit 0.01', '#28254382 buy 0.01).01', '#28301187 sell limit 0.01', '#28643538 sell limit 0.01', '#28712514 sell limit 0.01', '#28736116 sell limit 0.01', '#28736115 sell limit 0.01', '#28736111 sell limit 0.01', '#28736110 sell limit 0.01', '#28736108 sell limit 0.01', '#28736106 sell limit 0.01', '#28756815 sell limit 0.01', '#28756852 sell 0.01', '#28813251 sell 0.01', '#28786498 sell 0.01', '#28807801 buy 0.01', '#28789919 buy limit 0.01', '#28789918 buy limit 0.01', '#27916329 buy limit 0.01'];
  labels.forEach((t, i) => { s += `<text class="c-lbl" x="20" y="${Math.round(127 + 35.5 * i)}">${t}</text>`; });
  s += '<text class="c-lbl" x="20" y="617">#28807801 sl</text><text class="c-lbl" x="66" y="553">ps@l 2</text>';

  // bands
  [upper, middle, lower].forEach(b => { s += `<path d="${smooth(b)}" fill="none" stroke="#33a868"/>`; });

  // candles
  let wick = '', body = '', white = '', black = '';
  for (let x = 15; x < 1508; x += 4) {
    const o = yAt(x - 2) + (rnd() - .5) * 20, c = yAt(x + 2) + (rnd() - .5) * 20;
    const t = Math.round(Math.min(o, c)), h = Math.max(Math.round(Math.max(o, c)) - t, 1);
    const hi = t - Math.round(rnd() * rnd() * 40), lo = t + h + Math.round(rnd() * rnd() * 40);
    wick += `M${x} ${hi}h1V${lo}h-1z`;
    body += `M${x - 1} ${t}h3v${h + 1}h-3z`;
    if (h > 1) {
      if (c > o) white += `M${x} ${t + 1}h1v${h - 1}h-1z`; else black += `M${x} ${t + 1}h1v${h - 1}h-1z`;
    }
  }
  s += `<g shape-rendering="crispEdges"><path d="${wick}${body}" fill="#00f000"/><path d="${white}" fill="#fff"/><path d="${black}" fill="#000"/>`;

  // horizontal objects
  s += '<rect x="67" y="153" width="1820" height="2" fill="#8e2fb2"/><rect x="14" y="305" width="53" height="2" fill="#8e2fb2"/>';
  s += '<rect x="14" y="412" width="1873" height="2" fill="#3c62d2"/>';
  s += '<rect x="14" y="559" width="53" height="1" fill="#999"/><rect x="67" y="559" width="1820" height="2" fill="#f00000"/>';
  s += '<path d="M14 619.500H1887" stroke="#e01010" stroke-dasharray="14 8 3 8"/>';
  s += '<rect x="14" y="749" width="1873" height="2" fill="#dc143c"/>';

  // frame and axes
  s += '<path d="M13.500 804V92.500H1887.500V804.500H13.500" fill="none" stroke="#fff"/>';
  for (let x = 13, i = 0; x < 1887; x += 64, i++) if (i < 24) s += `<path d="M${x + .5} 805v3" stroke="#fff"/>`;
  for (let i = 0; i < 20; i++) s += `<path d="M1888 ${Math.round(110.7 + 35.5 * i) + .5}h3" stroke="#fff"/>`;
  s += '</g>';
  for (let i = 0; i < 20; i++) {
    s += `<text class="c-ax" x="1893" y="${Math.round(110.7 + 35.5 * i) + 4}">${(1.2405 - i * 0.001).toFixed(4)}</text>`;
  }
  const times = ['6 Jan 2014', '7 Jan 14:00', '8 Jan 06:00', '8 Jan 22:00', '9 Jan 14:00', '10 Jan 06:00', '10 Jan 22:00', '13 Jan 15:00', '14 Jan 07:00', '14 Jan 23:00', '15 Jan 15:00', '16 Jan 07:00', '16 Jan 23:00', '17 Jan 15:00', '20 Jan 08:00', '21 Jan 00:03', '21 Jan 16:00', '22 Jan 08:00', '23 Jan 00:03', '23 Jan 16:00', '24 Jan 08:00', '27 Jan 01:00', '27 Jan 17:00', '28 Jan 09:00'];
  times.forEach((t, i) => { s += `<text class="c-ax" x="${13 + i * 64}" y="817">${t}</text>`; });

  // price tags
  [[412.7, '#4169e1', '1.2320'], [559.5, '#fff', '1.2279'], [749.8, '#dc143c', '1.2225']].forEach(p => {
    s += `<rect x="1889" y="${p[0] - 5.5}" width="36" height="11" fill="${p[1]}"/><text class="c-tag" x="1893" y="${p[0] + 4}">${p[2]}</text>`;
  });

  // header texts
  s += '<path d="M16 98h8l-4 4z" fill="#fff"/>';
  s += '<text class="c-hd" x="29" y="104">EURCHF,H1&#160; 1.2270 1.2282 1.2270 1.2279</text>';
  s += '<text class="c-hd" x="18" y="117">VYSAVAČ 1.2.1 &#160;|&#160; Rozsah: 1.198 - 1.268 &#160; Interval: 10 &#160; Lotu: 0.01 &#160; Profit: 0 &#160; Pozic:</text>';
  s += '<text class="c-hu" x="66" y="149">HU2</text><text class="c-hu" x="14" y="301">HU1</text>';
  s += '<path d="M1505 93h10l-5 5z" fill="#7b8a99"/>';
  s += '<text class="c-hd" text-anchor="end" x="1869" y="105">Vysavač - EURCHF</text>';
  s += '<circle cx="1876" cy="101" r="5" fill="none" stroke="#ddd"/><path d="M1873 103q3 3 6 0M1874 99h1M1877 99h1" stroke="#ddd" fill="none"/>';

  // info block
  s += '<path d="M1667 140.500h30M1845 140.500h32" stroke="#3a70e0"/>';
  s += '<text class="c-info c-web" x="1707" y="145" textLength="129" lengthAdjust="spacingAndGlyphs">www.FOREXROBOT.eu</text>';
  [['Margin 5496.17; StopLevel 5', 182, 157], ['Spread 4, TickValue 223.24', 177, 172], ['Swap Long -0.02 / Short -0.22', 193, 187], ['MinLot 0.01; Leverage 1 : 500', 190, 202], ['15x BUY 0.15 / 12x SELL 0.12', 193, 217]].forEach(l => {
    s += `<text class="c-info" x="${1877 - l[1]}" y="${l[2]}" textLength="${l[1]}" lengthAdjust="spacingAndGlyphs">${l[0]}</text>`;
  });
  s += '<text class="c-info c-profit" x="1716" y="236" textLength="161" lengthAdjust="spacingAndGlyphs">Profit -3101.43 CZK</text>';

  // vertical annotations
  s += '<text class="c-cyan" transform="translate(1217 603) rotate(-90)" textLength="120" lengthAdjust="spacingAndGlyphs">Zisk 1200,- CZK</text>';
  s += '<text class="c-cyan" transform="translate(1218 401) rotate(-90)" textLength="24" lengthAdjust="spacingAndGlyphs">BE</text>';
  s += '<rect x="1467.500" y="466.500" width="19" height="121" fill="none" stroke="#6f8090"/>';
  s += '<text class="c-cyan" transform="translate(1481 587) rotate(-90)" textLength="120" lengthAdjust="spacingAndGlyphs">Zisk 1500,- CZK</text>';
  s += '<path d="M1197 393l8 8M1205 393l-8 8" stroke="#f01010" stroke-width="2"/><rect x="1464" y="524" width="2" height="2" fill="#14cde0"/>';

  document.getElementById('chart').innerHTML = s;
</script>
<script src="https://cdn.jsdelivr.net/npm/bootstrap@5.3.3/dist/js/bootstrap.bundle.min.js"></script>
</body>
</html>
